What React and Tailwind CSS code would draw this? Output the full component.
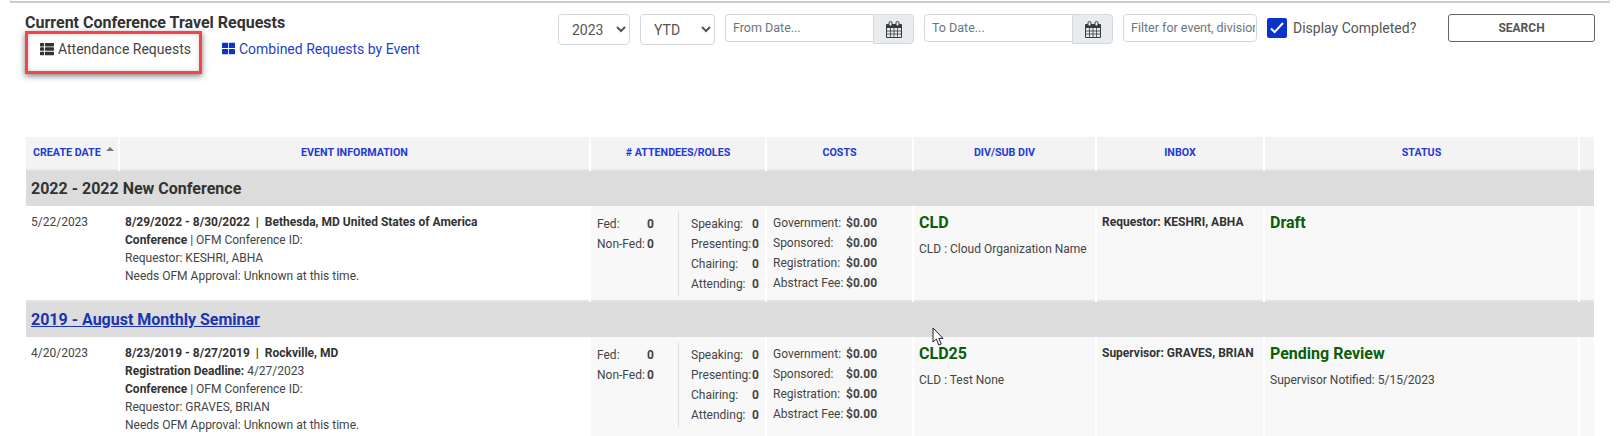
import React from "react";
import { FaThList, FaThLarge } from "react-icons/fa";

const columns = [93, 471, 176, 147, 183, 168, 315, 15];

const headers = ["Create Date", "Event Information", "# Attendees/Roles", "Costs", "Div/Sub Div", "Inbox", "Status", ""];

const groups = [
  {
    title: "2022 - 2022 New Conference",
    isLink: false,
    date: "5/22/2023",
    rowHeight: "h-[95px]",
    when: "8/29/2022 - 8/30/2022",
    where: "Bethesda, MD United States of America",
    deadline: null,
    requestor: "KESHRI, ABHA",
    div: "CLD",
    subDiv: "CLD : Cloud Organization Name",
    inbox: "Requestor: KESHRI, ABHA",
    status: "Draft",
    statusNote: null,
  },
  {
    title: "2019 - August Monthly Seminar",
    isLink: true,
    date: "4/20/2023",
    rowHeight: "h-[110px]",
    when: "8/23/2019 - 8/27/2019",
    where: "Rockville, MD",
    deadline: "4/27/2023",
    requestor: "GRAVES, BRIAN",
    div: "CLD25",
    subDiv: "CLD : Test None",
    inbox: "Supervisor: GRAVES, BRIAN",
    status: "Pending Review",
    statusNote: "Supervisor Notified: 5/15/2023",
  },
];

const CalendarIcon = () => (
  <svg width="16" height="17" viewBox="0 0 16 17" fill="none">
    <path d="M.5 3.5h15v13H.5z" fill="#e9ecef" stroke="#3a3a3a" />
    <path d="M1 3h14v4H1z" fill="#3a3a3a" />
    <path d="M1 10h14M1 13h14M4.5 7v9M8 7v9M11.5 7v9" stroke="#3a3a3a" strokeWidth="0.8" />
    <rect x="3" y="0.5" width="3" height="4.5" rx="1.4" fill="#e9ecef" stroke="#3a3a3a" />
    <rect x="10" y="0.5" width="3" height="4.5" rx="1.4" fill="#e9ecef" stroke="#3a3a3a" />
  </svg>
);

const DateInput = ({ placeholder }) => (
  <div className="flex w-[189px] items-start">
    <input
      placeholder={placeholder}
      className="h-[28px] min-w-0 flex-1 rounded-l border border-r-0 border-[#d5d8db] px-[7px] pb-[2px] text-[12.5px] text-[#555] placeholder:text-[#6c757d]"
    />
    <span className="flex h-[30px] w-[41px] items-center justify-center rounded-r border border-[#d5d8db] bg-[#e9ecef]">
      <CalendarIcon />
    </span>
  </div>
);

const Stat = ({ label, value, labelWidth }) => (
  <div className="flex h-[20px] items-center whitespace-nowrap">
    <span className={labelWidth}>{label}</span>
    <span className="font-bold">{value}</span>
  </div>
);

const TableRow = ({ item }) => (
  <tr className={`${item.rowHeight} border-b-2 border-[#e4e4e4] align-top text-[12px] text-[#444]`}>
    <td className="bg-white pl-[5px] pt-[7px] leading-[18px]">{item.date}</td>
    <td className="bg-white pl-[6px] pt-[7px] leading-[18px]">
      <div className="font-bold text-[#333]">
        {item.when}&nbsp; |&nbsp; {item.where}
      </div>
      {item.deadline && (
        <div>
          <b className="text-[#333]">Registration Deadline:</b> {item.deadline}
        </div>
      )}
      <div>
        <b className="text-[#333]">Conference</b> | OFM Conference ID:
      </div>
      <div>Requestor: {item.requestor}</div>
      <div>Needs OFM Approval: Unknown at this time.</div>
    </td>
    <td className="border-l-2 border-white bg-[#f8f8f8] pl-[6px] pt-[6px]">
      <div className="flex">
        <div className="w-[82px] border-r border-[#ddd] pt-[2px]">
          <Stat label="Fed:" value="0" labelWidth="w-[50px]" />
          <Stat label="Non-Fed:" value="0" labelWidth="w-[50px]" />
        </div>
        <div className="h-[84px] pl-[12px] pt-[2px]">
          <Stat label="Speaking:" value="0" labelWidth="w-[61px]" />
          <Stat label="Presenting:" value="0" labelWidth="w-[61px]" />
          <Stat label="Chairing:" value="0" labelWidth="w-[61px]" />
          <Stat label="Attending:" value="0" labelWidth="w-[61px]" />
        </div>
      </div>
    </td>
    <td className="border-l-2 border-white bg-[#f8f8f8] pl-[6px] pt-[7px]">
      <Stat label="Government:" value="$0.00" labelWidth="w-[73px]" />
      <Stat label="Sponsored:" value="$0.00" labelWidth="w-[73px]" />
      <Stat label="Registration:" value="$0.00" labelWidth="w-[73px]" />
      <Stat label="Abstract Fee:" value="$0.00" labelWidth="w-[73px]" />
    </td>
    <td className="border-l-2 border-white bg-[#f8f8f8] pl-[5px] pt-[7px]">
      <div className="text-[16px] leading-[19px] font-bold text-[#0b5d0b]">{item.div}</div>
      <div className="mt-[8px] leading-[18px]">{item.subDiv}</div>
    </td>
    <td className="border-l-2 border-white bg-[#f8f8f8] pl-[5px] pt-[8px] leading-[16px] font-bold text-[#333]">
      {item.inbox}
    </td>
    <td className="border-l-2 border-white bg-[#f8f8f8] pl-[5px] pt-[7px]">
      <div className="text-[16px] leading-[19px] font-bold text-[#0b5d0b]">{item.status}</div>
      {item.statusNote && <div className="mt-[8px] leading-[18px]">{item.statusNote}</div>}
    </td>
    <td className="border-l-2 border-white bg-[#f8f8f8]"></td>
  </tr>
);

export default function App() {
  return (
    <div className="relative h-[436px] w-[1620px] overflow-hidden bg-white font-['Roboto',sans-serif] text-[#444]">
      <div className="mx-[10px] h-[3px] border-x border-b-2 border-[#ccc]"></div>

      <div className="flex pl-[25px] pt-[12px]">
        <div className="w-[533px]">
          <h1 className="text-[16px] leading-[16px] font-bold text-[#333]">Current Conference Travel Requests</h1>
          <div className="flex items-start">
            <div className="flex h-[43px] w-[177px] items-start gap-[4px] border-[3px] border-[#f2444a] pl-[12px] pt-[5px] text-[14px] leading-[20px] shadow-[0_2px_6px_rgba(0,0,0,0.5),inset_0_0_4px_rgba(0,0,0,0.2)]">
              <FaThList className="mt-[3px] text-[14px] text-[#333]" />
              Attendance Requests
            </div>
            <div className="ml-[20px] flex items-start gap-[4px] pt-[8px] text-[14px] leading-[20px] text-[#1f3fc8]">
              <FaThLarge className="mt-[3px] text-[13px] text-[#0a33cc]" />
              Combined Requests by Event
            </div>
          </div>
        </div>

        <div className="-mt-[1px] flex items-start">
          <select className="h-[31px] w-[72px] rounded border border-[#d5d8db] pl-[9px] text-[14px] text-[#555]">
            <option>2023</option>
          </select>
          <select className="ml-[10px] h-[31px] w-[75px] rounded border border-[#d5d8db] pl-[9px] text-[14px] text-[#555]">
            <option>YTD</option>
          </select>
          <div className="ml-[10px]">
            <DateInput placeholder="From Date..." />
          </div>
          <div className="ml-[10px]">
            <DateInput placeholder="To Date..." />
          </div>
          <input
            placeholder="Filter for event, division, requestor"
            className="ml-[10px] h-[28px] w-[134px] rounded border border-[#d5d8db] pb-[2px] pl-[7px] pr-[1px] text-[12.5px] placeholder:text-[#6c757d]"
          />
          <span className="ml-[10px] mt-[4px] flex h-[20px] w-[20px] items-center justify-center rounded-[2px] bg-[#0a33cc]">
            <svg width="14" height="14" viewBox="0 0 14 14" fill="none">
              <path d="M1 7.5l3.6 3.6L13 2" stroke="white" strokeWidth="2" />
            </svg>
          </span>
          <span className="ml-[6px] mt-[4px] w-[155px] text-[14px] leading-[20px] text-[#555]">Display Completed?</span>
          <button className="h-[28px] w-[147px] rounded-[3px] border border-[#666] text-[12px] font-bold text-[#555]">
            SEARCH
          </button>
        </div>
      </div>

      <table className="ml-[26px] mt-[63px] w-[1568px] table-fixed border-collapse">
        <colgroup>
          {columns.map((width, i) => (
            <col key={i} style={{ width }} />
          ))}
        </colgroup>
        <thead>
          <tr className="h-[33px] border-b-2 border-[#e4e4e4] bg-[#f3f3f3] text-[10.7px] font-bold text-[#1f3ad6] uppercase">
            {headers.map((header, i) => (
              <th key={i} className={i === 0 ? "pl-[7px] text-left font-bold whitespace-nowrap" : "border-l-2 border-white text-center font-bold"}>
                {header}
                {i === 0 && (
                  <span className="relative top-[-5px] ml-[5px] inline-block h-0 w-0 border-x-[4px] border-b-[4px] border-x-transparent border-b-[#777]"></span>
                )}
              </th>
            ))}
          </tr>
        </thead>
        <tbody>
          {groups.map((item) => (
            <React.Fragment key={item.title}>
              <tr className="h-[36px] bg-[#dcdcdc]">
                <td colSpan={8} className="pl-[5px] text-[16px] font-bold text-[#333]">
                  {item.isLink ? <a href="#" className="text-[#1a34b4] underline">{item.title}</a> : item.title}
                </td>
              </tr>
              <TableRow item={item} />
            </React.Fragment>
          ))}
        </tbody>
      </table>

      <svg className="absolute left-[932px] top-[327px]" width="13" height="20" viewBox="0 0 13 20">
        <path d="M1 1v14l3.4-3 2.4 6 2.4-1-2.4-5.6H11z" fill="white" stroke="#222" strokeWidth="1" />
      </svg>
    </div>
  );
}
